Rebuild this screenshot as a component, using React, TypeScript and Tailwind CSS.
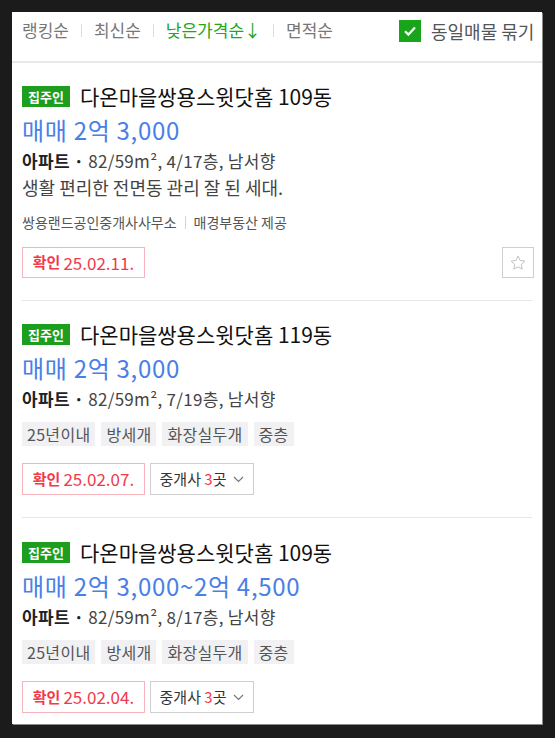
import React from 'react';

type Listing = {
  title: string;
  price: string;
  info: string;
  desc?: string;
  agents?: string[];
  tags?: string[];
  confirmed: string;
  brokers?: number;
  star?: boolean;
};

const listings: Listing[] = [
  {
    title: '다온마을쌍용스윗닷홈 109동',
    price: '매매 2억 3,000',
    info: '82/59m², 4/17층, 남서향',
    desc: '생활 편리한 전면동 관리 잘 된 세대.',
    agents: ['쌍용랜드공인중개사사무소', '매경부동산 제공'],
    confirmed: '25.02.11.',
    star: true,
  },
  {
    title: '다온마을쌍용스윗닷홈 119동',
    price: '매매 2억 3,000',
    info: '82/59m², 7/19층, 남서향',
    tags: ['25년이내', '방세개', '화장실두개', '중층'],
    confirmed: '25.02.07.',
    brokers: 3,
  },
  {
    title: '다온마을쌍용스윗닷홈 109동',
    price: '매매 2억 3,000~2억 4,500',
    info: '82/59m², 8/17층, 남서향',
    tags: ['25년이내', '방세개', '화장실두개', '중층'],
    confirmed: '25.02.04.',
    brokers: 3,
  },
];

const Sep = () => <span className="mx-[12px] inline-block h-[13px] w-px bg-[#dcdcdc]" />;

const ListingCard = ({ item, index }: { item: Listing; index: number }) => {
  const last = index === listings.length - 1;
  const pad = index === 2 ? 'pt-[23px]' : 'pt-[22px]';
  return (
    <div className={`mx-[10px] ${pad} ${last ? 'pb-[11px]' : 'pb-[22px] border-b border-[#e6e6e6]'}`}>
      <div className="flex h-[22px] items-center">
        <span className="flex h-[21px] w-[48px] items-center justify-center bg-[#1e9e1e] text-[13px] font-bold leading-none text-white">
          집주인
        </span>
        <span className="ml-[10px] whitespace-nowrap text-[21px] leading-[22px] text-[#111]">{item.title}</span>
      </div>
      <div className="mt-[9px] text-[24px] leading-[28px] tracking-[0.7px] text-[#4a80e5]">{item.price}</div>
      <div className="mt-[5px] text-[17px] leading-[24px] tracking-[0.3px] text-[#444]">
        <span className="font-bold text-[#222]">아파트</span>
        <span className="mx-[4px] font-bold text-[#222]">·</span>
        {item.info}
      </div>
      {item.desc && <div className="mt-[2px] text-[18px] leading-[24px] text-[#444]">{item.desc}</div>}
      {item.agents && (
        <div className="mt-[13px] flex items-center text-[14px] leading-[20px] text-[#555]">
          <span>{item.agents[0]}</span>
          <span className="mx-[8px] inline-block h-[13px] w-px bg-[#d6d6d6]" />
          <span>{item.agents[1]}</span>
        </div>
      )}
      {item.tags && (
        <div className="mt-[11px] flex gap-[6px]">
          {item.tags.map((t) => (
            <span key={t} className="h-[24px] bg-[#f1f1f4] px-[5px] text-[16px] leading-[24px] tracking-[0.3px] text-[#555]">
              {t}
            </span>
          ))}
        </div>
      )}
      <div className={`${item.agents ? 'mt-[15px]' : 'mt-[17px]'} flex items-center`}>
        <span
          className={`flex ${item.agents ? 'h-[31px]' : 'h-[32px]'} w-[123px] items-center justify-center border border-[#f8b4bc] text-[17px] text-[#f2394b]`}
        >
          <span className="mr-[3px] text-[15px] font-bold">확인</span>
          {item.confirmed}
        </span>
        {item.brokers && (
          <span className="ml-[5px] flex h-[32px] w-[104px] items-center justify-center border border-[#cfcfcf] text-[15px] text-[#333]">
            중개사&nbsp;<span className="text-[#f2394b]">{item.brokers}</span>곳
            <svg className="ml-[7px]" width="11" height="7" viewBox="0 0 11 7" fill="none">
              <path d="M1 1l4.5 4.5L10 1" stroke="#777" strokeWidth="1.2" />
            </svg>
          </span>
        )}
        {item.star && (
          <span className="ml-auto mr-[-2px] flex h-[31px] w-[32px] items-center justify-center border border-[#cfcfcf]">
            <svg width="18" height="18" viewBox="0 0 24 24" fill="none">
              <path
                d="M12 2.8l2.8 5.8 6.3.9-4.6 4.4 1.1 6.3L12 17.2l-5.6 3 1.1-6.3-4.6-4.4 6.3-.9z"
                stroke="#bdbdbd"
                strokeWidth="1.3"
                strokeLinejoin="round"
              />
            </svg>
          </span>
        )}
      </div>
    </div>
  );
};

export default function App() {
  return (
    <div
      className="min-h-[738px] w-[555px] bg-[#1b1b1b] pl-[12px] pt-[12px]"
      style={{ fontFamily: '"Noto Sans CJK KR", "Noto Sans", sans-serif' }}
    >
      <div className="w-[530px] overflow-hidden bg-white shadow-[1px_1px_0_#8a8a8a]">
        <div className="flex h-[51px] items-start border-b-2 border-[#e8e8e8] pl-[10px] pt-[6px] text-[17px] leading-[24px] text-[#777]">
          <span className="flex items-center">
            <span>랭킹순</span>
            <Sep />
            <span>최신순</span>
            <Sep />
            <span className="text-[#22a61c]">낮은가격순↓</span>
            <Sep />
            <span>면적순</span>
          </span>
          <span className="ml-[66px] flex shrink-0 items-center whitespace-nowrap pt-[1px]">
            <span className="mr-[10px] flex h-[22px] w-[22px] items-center justify-center bg-[#19a519]">
              <svg width="14" height="12" viewBox="0 0 14 12" fill="none">
                <path d="M2 6.2l3.4 3.4L12 2.5" stroke="white" strokeWidth="2.2" />
              </svg>
            </span>
            <span className="text-[18px] text-[#555]">동일매물 묶기</span>
          </span>
        </div>
        {listings.map((l, i) => (
          <ListingCard key={i} item={l} index={i} />
        ))}
      </div>
    </div>
  );
}
